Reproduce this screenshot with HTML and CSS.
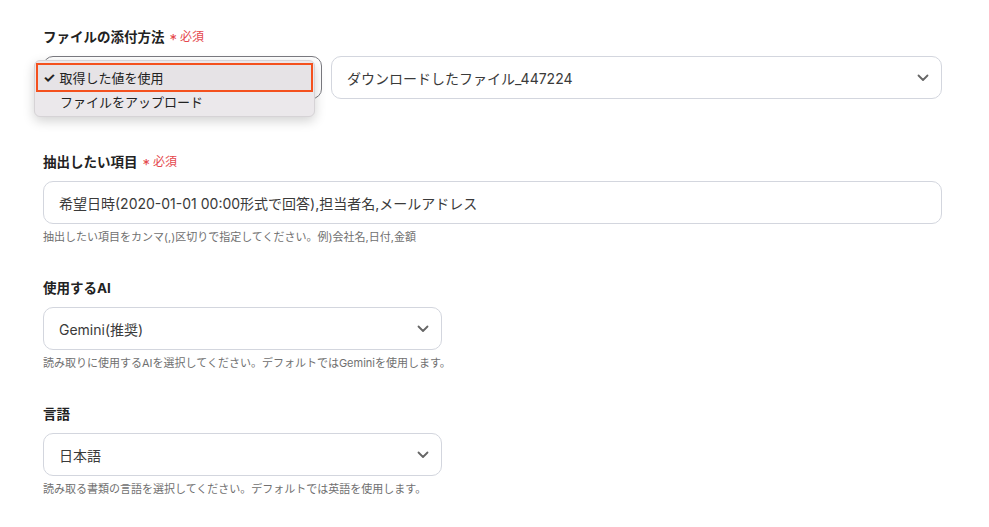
FILE: index.html
```html
<!DOCTYPE html>
<html lang="ja">
<head>
<meta charset="utf-8">
<link rel="stylesheet" href="styles.css">
</head>
<body>
<div class="form">
  <div class="field field-first">
    <div class="label">ファイルの添付方法<span class="req"><span class="star">*</span>必須</span></div>
    <div class="row">
      <div class="select select-method focused">
        <span class="value"></span>
        <svg class="chev" viewBox="0 0 12 8"><path d="M1.5 1.5 L6 6 L10.5 1.5"/></svg>
      </div>
      <div class="select select-file">
        <span class="value">ダウンロードしたファイル_447224</span>
        <svg class="chev" viewBox="0 0 12 8"><path d="M1.5 1.5 L6 6 L10.5 1.5"/></svg>
      </div>
      <div class="menu">
        <div class="menu-item selected"><span class="check">✓</span>取得した値を使用</div>
        <div class="menu-item">ファイルをアップロード</div>
      </div>
    </div>
  </div>

  <div class="field field-second">
    <div class="label">抽出したい項目<span class="req"><span class="star">*</span>必須</span></div>
    <div class="input">希望日時(2020-01-01 00:00形式で回答),担当者名,メールアドレス</div>
    <div class="help">抽出したい項目をカンマ(,)区切りで指定してください。例)会社名,日付,金額</div>
  </div>

  <div class="field">
    <div class="label">使用するAI</div>
    <div class="select select-half">
      <span class="value">Gemini(推奨)</span>
      <svg class="chev" viewBox="0 0 12 8"><path d="M1.5 1.5 L6 6 L10.5 1.5"/></svg>
    </div>
    <div class="help">読み取りに使用するAIを選択してください。デフォルトではGeminiを使用します。</div>
  </div>

  <div class="field">
    <div class="label">言語</div>
    <div class="select select-half">
      <span class="value">日本語</span>
      <svg class="chev" viewBox="0 0 12 8"><path d="M1.5 1.5 L6 6 L10.5 1.5"/></svg>
    </div>
    <div class="help">読み取る書類の言語を選択してください。デフォルトでは英語を使用します。</div>
  </div>
</div>
</body>
</html>
```

FILE: styles.css
```css
* { box-sizing: border-box; }
html, body {
  margin: 0;
  padding: 0;
  background: #ffffff;
}
body {
  font-family: Inter, "Noto Sans CJK JP", sans-serif;
  color: #333;
}
.form {
  padding: 27px 0 0 43px;
  width: 942px;
}
.field { margin-top: 33px; }
.field-first { margin-top: 0; }
.field-second { margin-top: 53px; }
.label {
  font-size: 13.5px;
  line-height: 20px;
  font-weight: 700;
  color: #222;
  margin-bottom: 9px;
  display: flex;
  align-items: center;
}
.req {
  font-size: 12px;
  font-weight: 400;
  color: #e5484d;
  margin-left: 5px;
  display: inline-flex;
  align-items: center;
}
.star {
  font-size: 15px;
  margin-right: 3px;
  line-height: 1;
  position: relative;
  top: 2px;
}
.row {
  position: relative;
  display: flex;
  gap: 9px;
}
.select, .input {
  height: 43px;
  border: 1px solid #d3d6de;
  border-radius: 10px;
  background: #fff;
  display: flex;
  align-items: center;
  padding: 0 15px;
  font-size: 14px;
  color: #3a3a3a;
}
.select {
  justify-content: space-between;
  padding-right: 12px;
}
.select-method { width: 279px; }
.select-method.focused { border-color: #7a7a80; }
.select-file { flex: 1; }
.select-half { width: 399px; }
.chev {
  width: 12px;
  height: 8px;
  fill: none;
  stroke: #666;
  stroke-width: 1.8;
  stroke-linecap: round;
  stroke-linejoin: round;
}
.help {
  font-size: 11px;
  line-height: 16px;
  color: #707070;
  margin-top: 5px;
}
.menu {
  position: absolute;
  left: -9px;
  top: 4px;
  width: 281px;
  height: 57px;
  background: #ebe8eb;
  border: 1px solid #d6d3d6;
  border-radius: 6px;
  box-shadow: 0 4px 12px rgba(0, 0, 0, 0.18);
  padding: 2px 1px;
}
.menu-item {
  height: 19px;
  display: flex;
  align-items: center;
  padding-left: 24px;
  font-size: 13px;
  color: #222;
  position: relative;
}
.menu-item.selected {
  height: 29px;
  border: 2.5px solid #f4511e;
  background: #e6e3e6;
  padding-left: 21.5px;
}
.check {
  position: absolute;
  left: 5px;
  font-size: 14px;
  font-weight: 700;
}
```
